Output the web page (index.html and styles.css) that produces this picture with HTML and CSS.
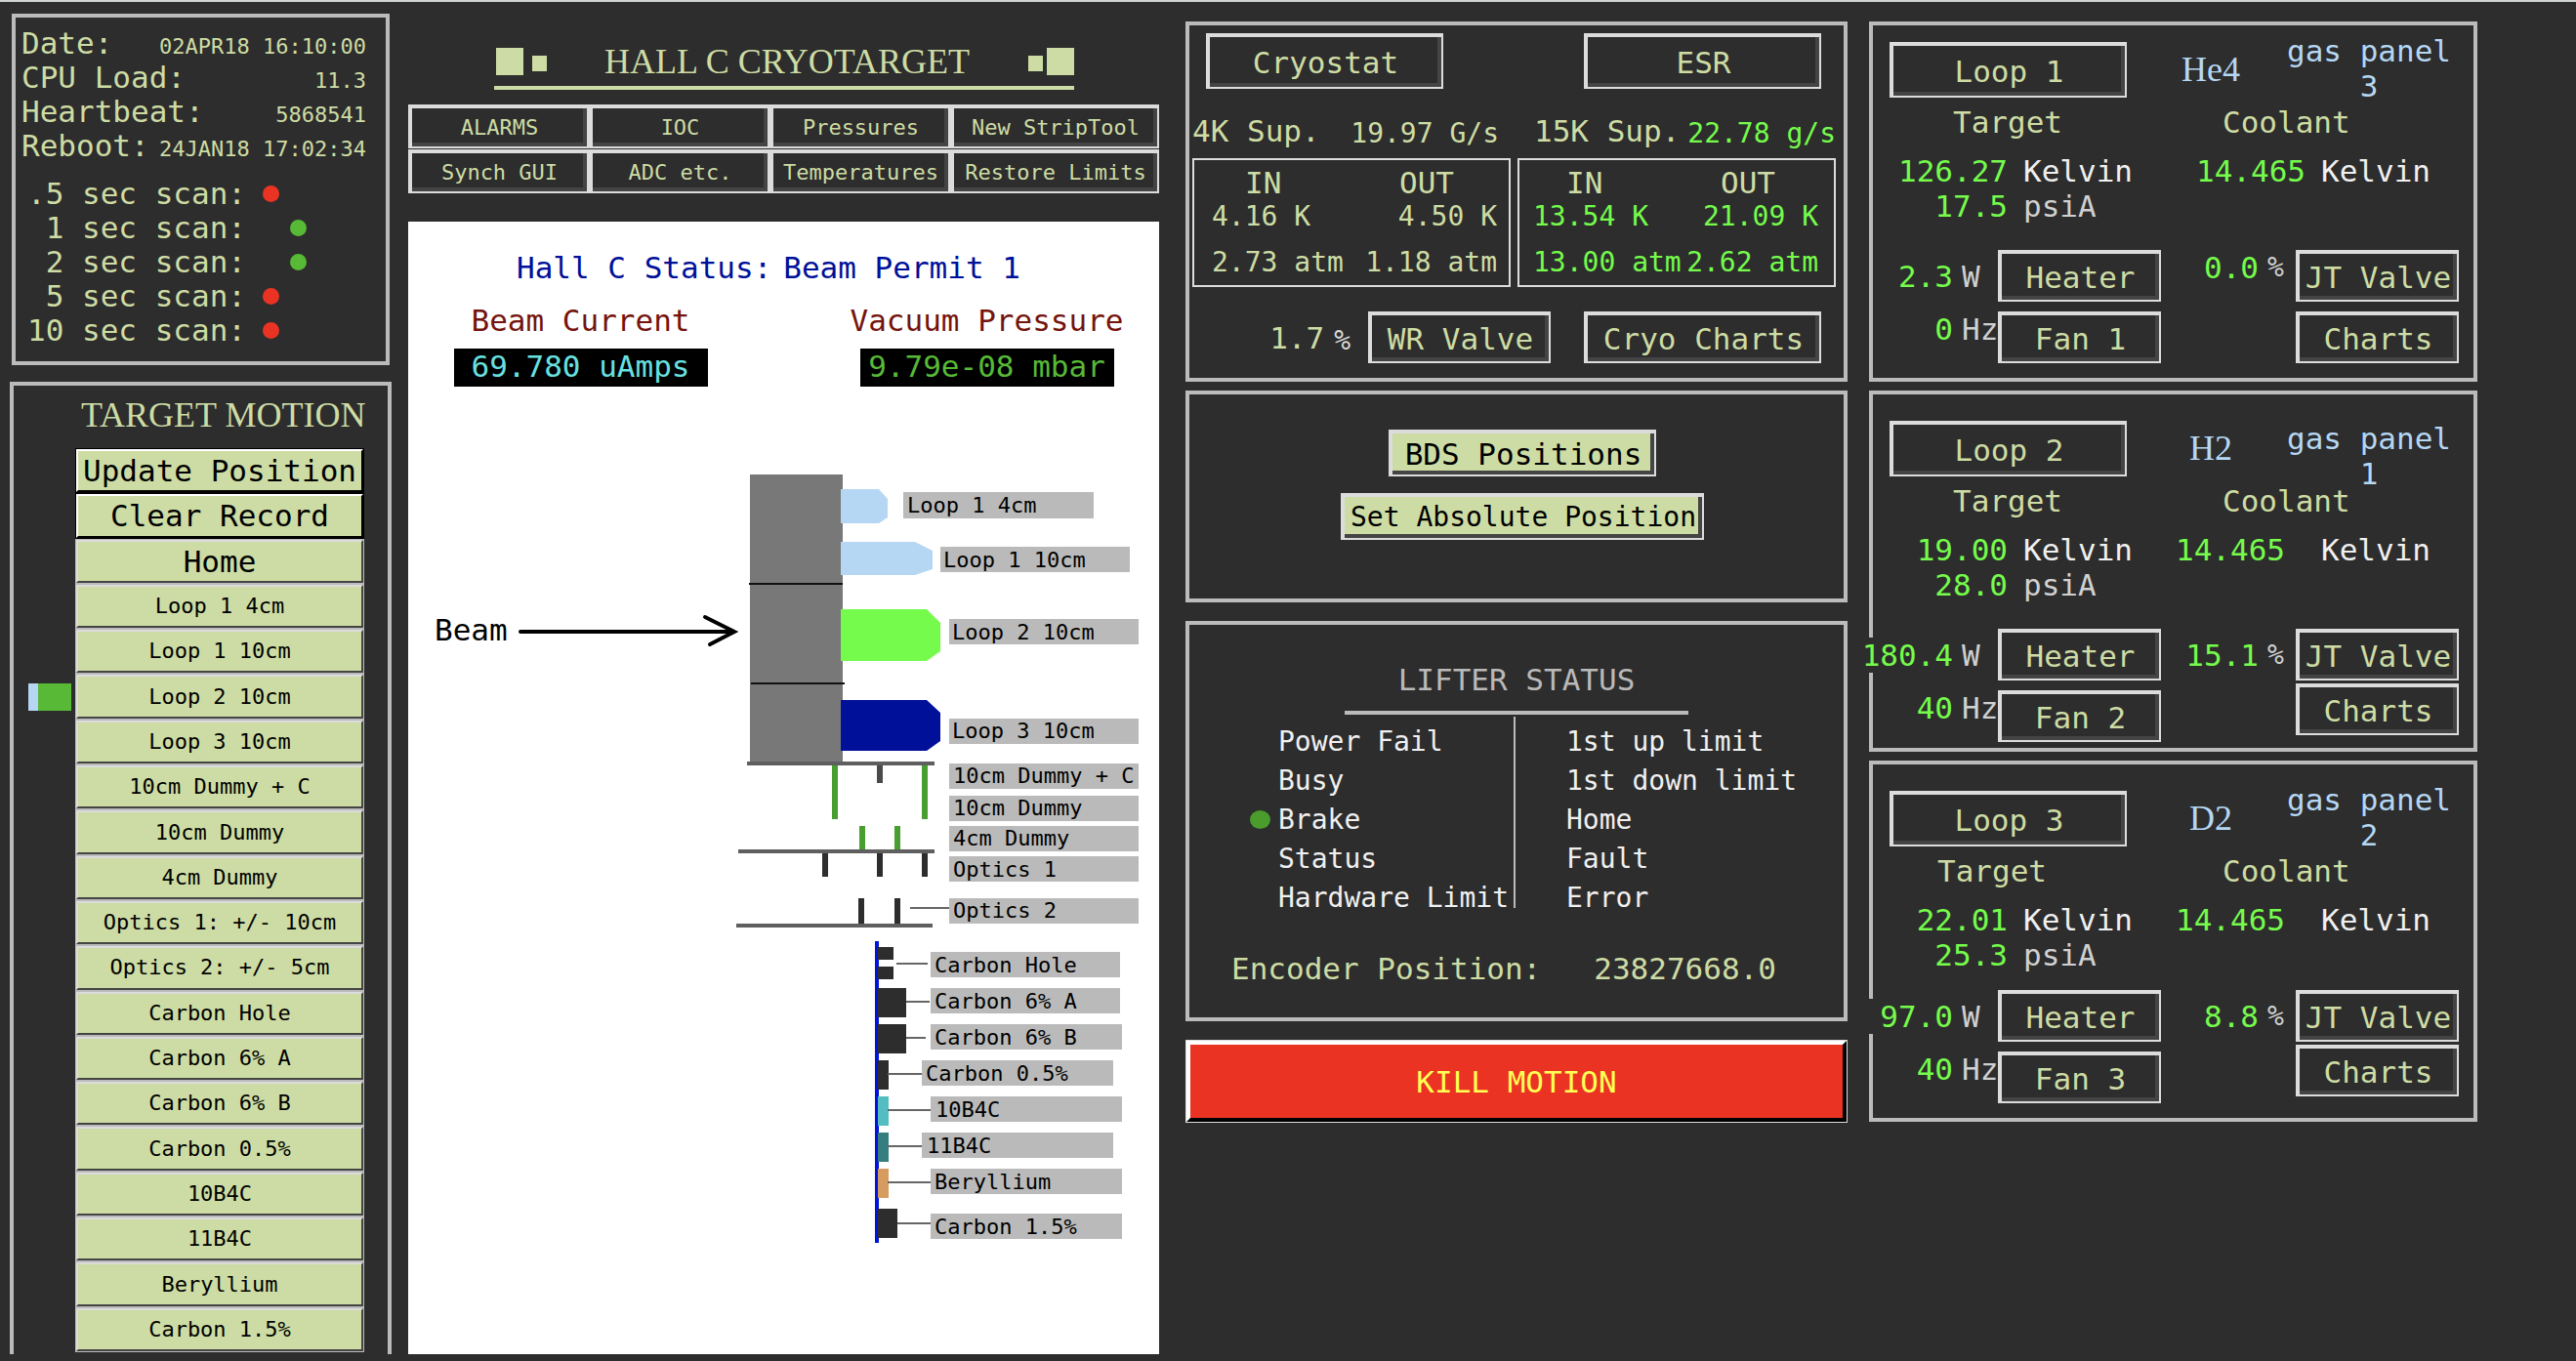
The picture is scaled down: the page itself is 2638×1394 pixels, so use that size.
FILE: index.html
```html
<!DOCTYPE html>
<html lang="en">
<head>
    <meta charset="UTF-8">
    <meta name="viewport" content="width=device-width, initial-scale=1.0">
    <title>Hall C Cryotarget</title>
    <link rel="stylesheet" href="styles.css">
</head>
<body>
    <main class="screen">
        <!-- IOC health and target motion -->
        <section class="col col-motion">
            <div class="panel ioc">
                <dl class="ioc-info">
                    <dt>Date:</dt><dd>02APR18 16:10:00</dd>
                    <dt>CPU Load:</dt><dd>11.3</dd>
                    <dt>Heartbeat:</dt><dd>5868541</dd>
                    <dt>Reboot:</dt><dd>24JAN18 17:02:34</dd>
                </dl>
                <ul class="scans">
                    <li><span>.5 sec scan:</span><i class="led led-red"></i></li>
                    <li><span>1 sec scan:</span><i class="led led-green"></i></li>
                    <li><span>2 sec scan:</span><i class="led led-green"></i></li>
                    <li><span>5 sec scan:</span><i class="led led-red"></i></li>
                    <li><span>10 sec scan:</span><i class="led led-red"></i></li>
                </ul>
            </div>

            <div class="panel motion">
                <h2 class="serif">TARGET MOTION</h2>
                <div class="positions">
                    <div class="marker"></div>
                    <button type="button" class="pos pos-main pos-default">Update Position</button>
                    <button type="button" class="pos pos-main pos-default">Clear Record</button>
                    <button type="button" class="pos pos-main">Home</button>
                    <button type="button" class="pos">Loop 1 4cm</button>
                    <button type="button" class="pos">Loop 1 10cm</button>
                    <button type="button" class="pos">Loop 2 10cm</button>
                    <button type="button" class="pos">Loop 3 10cm</button>
                    <button type="button" class="pos">10cm Dummy + C</button>
                    <button type="button" class="pos">10cm Dummy</button>
                    <button type="button" class="pos">4cm Dummy</button>
                    <button type="button" class="pos">Optics 1: +/- 10cm</button>
                    <button type="button" class="pos">Optics 2: +/- 5cm</button>
                    <button type="button" class="pos">Carbon Hole</button>
                    <button type="button" class="pos">Carbon 6% A</button>
                    <button type="button" class="pos">Carbon 6% B</button>
                    <button type="button" class="pos">Carbon 0.5%</button>
                    <button type="button" class="pos">10B4C</button>
                    <button type="button" class="pos">11B4C</button>
                    <button type="button" class="pos">Beryllium</button>
                    <button type="button" class="pos">Carbon 1.5%</button>
                </div>
            </div>
        </section>

        <!-- Title, menu and target ladder -->
        <section class="col col-ladder">
            <header class="title">
                <i class="sq sq-big"></i><i class="sq sq-left"></i>
                <h1 class="serif">HALL C CRYOTARGET</h1>
                <i class="sq sq-right"></i><i class="sq sq-big"></i>
            </header>
            <nav class="menu">
                <button type="button" class="btn">ALARMS</button>
                <button type="button" class="btn">IOC</button>
                <button type="button" class="btn">Pressures</button>
                <button type="button" class="btn">New StripTool</button>
                <button type="button" class="btn">Synch GUI</button>
                <button type="button" class="btn">ADC etc.</button>
                <button type="button" class="btn">Temperatures</button>
                <button type="button" class="btn">Restore Limits</button>
            </nav>
            <div class="ladder">
                <p class="hall-status"><span>Hall C Status:</span><span>Beam Permit 1</span></p>
                <div class="beam-info">
                    <div class="beam-item">
                        <h3>Beam Current</h3>
                        <div class="readout cyan">69.780 uAmps</div>
                    </div>
                    <div class="beam-item">
                        <h3>Vacuum Pressure</h3>
                        <div class="readout lime">9.79e-08 mbar</div>
                    </div>
                </div>
                <svg class="ladder-svg" viewBox="418 395 769 991">
                    <!-- beam arrow -->
                    <text class="beam-text" x="445" y="655">Beam</text>
                    <path class="arrow" d="M533 646H752M722 631L752 646L727 659"/>

                    <!-- loop cells -->
                    <rect x="768" y="485" width="95" height="295" fill="#787878"/>
                    <path d="M767 597H863M769 699H865" stroke="#111" stroke-width="2"/>
                    <path d="M861 500H900L909 510V529L900 535H861Z" fill="#b5d7f3"/>
                    <path d="M861 554H937L955 563V582L937 588H861Z" fill="#b5d7f3"/>
                    <path d="M861 623H949L963 637V666L949 676H861Z" fill="#75fb4c"/>
                    <path d="M861 716H949L963 729V758L949 768H861Z" fill="#001099"/>

                    <!-- dummies and optics -->
                    <path d="M765 781H957M756 871H957M754 947H955" stroke="#5f5f5f" stroke-width="4"/>
                    <path d="M855 783V838M947 783V838M883 845V869M919 845V869" stroke="#489e30" stroke-width="6"/>
                    <path d="M901 783V801" stroke="#4a4a4a" stroke-width="6"/>
                    <path d="M845 873V897M901 873V897M947 873V897M882 919V945M919 919V945" stroke="#2d2d2d" stroke-width="6"/>

                    <!-- solid targets -->
                    <path d="M898 963V1272" stroke="#0014d8" stroke-width="4"/>
                    <g fill="#2d2d2d">
                        <rect x="899" y="969" width="16" height="13"/>
                        <rect x="899" y="989" width="16" height="13"/>
                        <rect x="899" y="1011" width="29" height="30"/>
                        <rect x="899" y="1048" width="29" height="30"/>
                        <rect x="899" y="1085" width="11" height="30"/>
                        <rect x="899" y="1237" width="20" height="30"/>
                    </g>
                    <rect x="899" y="1122" width="11" height="30" fill="#53bdc1"/>
                    <rect x="899" y="1159" width="11" height="30" fill="#367d80"/>
                    <rect x="899" y="1196" width="11" height="30" fill="#d69b5e"/>
                    <path d="M932 929H972M918 986H950M928 1025H952M928 1062H948M909 1099H944M909 1136H953M909 1173H944M909 1210H953M919 1252H953" stroke="#666" stroke-width="2"/>

                    <!-- labels -->
                    <g fill="#bababa">
                        <rect x="925" y="503" width="195" height="27"/>
                        <rect x="963" y="559" width="194" height="26"/>
                        <rect x="972" y="633" width="194" height="26"/>
                        <rect x="972" y="735" width="194" height="26"/>
                        <rect x="972" y="781" width="194" height="26"/>
                        <rect x="972" y="814" width="194" height="26"/>
                        <rect x="972" y="845" width="194" height="26"/>
                        <rect x="972" y="876" width="194" height="26"/>
                        <rect x="972" y="919" width="194" height="26"/>
                        <rect x="953" y="974" width="194" height="26"/>
                        <rect x="953" y="1011" width="194" height="26"/>
                        <rect x="953" y="1048" width="196" height="26"/>
                        <rect x="944" y="1085" width="196" height="26"/>
                        <rect x="953" y="1122" width="196" height="26"/>
                        <rect x="944" y="1159" width="196" height="26"/>
                        <rect x="953" y="1196" width="196" height="26"/>
                        <rect x="953" y="1242" width="196" height="26"/>
                    </g>
                    <g class="tag">
                        <text x="929" y="524">Loop 1 4cm</text>
                        <text x="966" y="580">Loop 1 10cm</text>
                        <text x="975" y="654">Loop 2 10cm</text>
                        <text x="975" y="755">Loop 3 10cm</text>
                        <text x="976" y="801">10cm Dummy + C</text>
                        <text x="976" y="834">10cm Dummy</text>
                        <text x="976" y="865">4cm Dummy</text>
                        <text x="976" y="897">Optics 1</text>
                        <text x="976" y="939">Optics 2</text>
                        <text x="957" y="995">Carbon Hole</text>
                        <text x="957" y="1032">Carbon 6% A</text>
                        <text x="957" y="1069">Carbon 6% B</text>
                        <text x="948" y="1106">Carbon 0.5%</text>
                        <text x="958" y="1143">10B4C</text>
                        <text x="949" y="1180">11B4C</text>
                        <text x="957" y="1217">Beryllium</text>
                        <text x="957" y="1263">Carbon 1.5%</text>
                    </g>
                </svg>
            </div>
        </section>

        <!-- Cryogen supply and lifter -->
        <section class="col col-cryo">
            <div class="panel supply">
                <div class="supply-top">
                    <button type="button" class="btn btn-wide">Cryostat</button>
                    <button type="button" class="btn btn-wide">ESR</button>
                </div>
                <div class="supply-grid">
                    <div class="sup"><span>4K Sup.</span><span class="mid">19.97 G/s</span></div>
                    <div class="sup sup-15k"><span>15K Sup.</span><span class="mid green">22.78 g/s</span></div>
                    <table class="flows">
                        <tr><th>IN</th><th>OUT</th></tr>
                        <tr><td>4.16 K</td><td>4.50 K</td></tr>
                        <tr class="atm"><td>2.73 atm</td><td>1.18 atm</td></tr>
                    </table>
                    <table class="flows flows-15k">
                        <tr><th>IN</th><th>OUT</th></tr>
                        <tr><td>13.54 K</td><td>21.09 K</td></tr>
                        <tr class="atm"><td>13.00 atm</td><td>2.62 atm</td></tr>
                    </table>
                </div>
                <div class="supply-bottom">
                    <span>1.7</span>
                    <span class="percent">%</span>
                    <button type="button" class="btn btn-valve">WR Valve</button>
                    <button type="button" class="btn btn-wide">Cryo Charts</button>
                </div>
            </div>

            <div class="panel bds">
                <button type="button" class="btn btn-green btn-bds">BDS Positions</button>
                <button type="button" class="btn btn-green btn-abs">Set Absolute Position</button>
            </div>

            <div class="panel lifter">
                <h2>LIFTER STATUS</h2>
                <div class="lifter-lists">
                    <ul>
                        <li>Power Fail</li>
                        <li>Busy</li>
                        <li class="on">Brake</li>
                        <li>Status</li>
                        <li>Hardware Limit</li>
                    </ul>
                    <ul>
                        <li>1st up limit</li>
                        <li>1st down limit</li>
                        <li>Home</li>
                        <li>Fault</li>
                        <li>Error</li>
                    </ul>
                </div>
                <p class="encoder"><span>Encoder Position:</span><span>23827668.0</span></p>
            </div>

            <button type="button" class="kill">KILL MOTION</button>
        </section>

        <!-- Loops -->
        <section class="col col-loops">
            <div class="panel loop loop-1">
                <div class="loop-side">
                    <div class="loop-head"><button type="button" class="btn btn-wide">Loop 1</button></div>
                    <h3>Target</h3>
                    <div class="readings">
                        <span class="val">126.27</span><span class="kelvin">Kelvin</span>
                        <span class="val">17.5</span><span class="unit">psiA</span>
                    </div>
                    <div class="controls">
                        <span class="val">2.3</span><span class="unit">W</span><button type="button" class="btn">Heater</button>
                    </div>
                    <div class="controls top">
                        <span class="val">0</span><span class="unit">Hz</span><button type="button" class="btn">Fan 1</button>
                    </div>
                </div>
                <div class="loop-side coolant">
                    <div class="loop-head">
                        <span class="gas serif">He4</span>
                        <span class="gas-panel">gas panel<br>3</span>
                    </div>
                    <h3>Coolant</h3>
                    <div class="readings">
                        <span class="val">14.465</span><span class="kelvin">Kelvin</span>
                    </div>
                    <div class="controls top">
                        <span class="val">0.0</span><span class="unit percent">%</span><button type="button" class="btn">JT Valve</button>
                    </div>
                    <div class="controls charts"><button type="button" class="btn">Charts</button></div>
                </div>
            </div>

            <div class="panel loop loop-2">
                <div class="loop-side">
                    <div class="loop-head"><button type="button" class="btn btn-wide">Loop 2</button></div>
                    <h3>Target</h3>
                    <div class="readings">
                        <span class="val">19.00</span><span class="kelvin">Kelvin</span>
                        <span class="val">28.0</span><span class="unit">psiA</span>
                    </div>
                    <div class="controls">
                        <span class="val power">180.4</span><span class="unit">W</span><button type="button" class="btn">Heater</button>
                    </div>
                    <div class="controls top">
                        <span class="val">40</span><span class="unit">Hz</span><button type="button" class="btn">Fan 2</button>
                    </div>
                </div>
                <div class="loop-side coolant">
                    <div class="loop-head">
                        <span class="gas serif">H2</span>
                        <span class="gas-panel">gas panel<br>1</span>
                    </div>
                    <h3>Coolant</h3>
                    <div class="readings">
                        <span class="val">14.465</span><span class="kelvin">Kelvin</span>
                    </div>
                    <div class="controls">
                        <span class="val">15.1</span><span class="unit percent">%</span><button type="button" class="btn">JT Valve</button>
                    </div>
                    <div class="controls charts"><button type="button" class="btn">Charts</button></div>
                </div>
            </div>

            <div class="panel loop loop-3">
                <div class="loop-side">
                    <div class="loop-head"><button type="button" class="btn btn-wide">Loop 3</button></div>
                    <h3>Target</h3>
                    <div class="readings">
                        <span class="val">22.01</span><span class="kelvin">Kelvin</span>
                        <span class="val">25.3</span><span class="unit">psiA</span>
                    </div>
                    <div class="controls">
                        <span class="val power">97.0</span><span class="unit">W</span><button type="button" class="btn">Heater</button>
                    </div>
                    <div class="controls top">
                        <span class="val">40</span><span class="unit">Hz</span><button type="button" class="btn">Fan 3</button>
                    </div>
                </div>
                <div class="loop-side coolant">
                    <div class="loop-head">
                        <span class="gas serif">D2</span>
                        <span class="gas-panel">gas panel<br>2</span>
                    </div>
                    <h3>Coolant</h3>
                    <div class="readings">
                        <span class="val">14.465</span><span class="kelvin">Kelvin</span>
                    </div>
                    <div class="controls">
                        <span class="val">8.8</span><span class="unit percent">%</span><button type="button" class="btn">JT Valve</button>
                    </div>
                    <div class="controls charts"><button type="button" class="btn">Charts</button></div>
                </div>
            </div>
        </section>
    </main>
</body>
</html>
```
FILE: styles.css
```css
:root {
    --bg: #2d2d2d;
    --pale: #cddca4;
    --line: #bbbbbb;
    --light: #dcdcdc;
    --shade: #444444;
    --green: #75fb4c;
    --blue: #b5d7f3;
    --small: 22px;
    --medium: 28px;
    --large: 31px;
}

* {
    box-sizing: border-box;
}

body {
    margin: 0;
    background: var(--bg);
    border-top: 2px solid #d0d4d0;
    color: var(--pale);
    font-family: "DejaVu Sans Mono", "Liberation Mono", monospace;
    font-size: var(--large);
    line-height: 36px;
}

h1, h2, h3, p, ul, dl, dd {
    margin: 0;
    padding: 0;
    font-size: inherit;
    font-weight: normal;
    list-style: none;
}

button {
    font: inherit;
    color: inherit;
    padding: 0;
    white-space: nowrap;
    cursor: pointer;
}

.serif {
    font-family: "Liberation Serif", serif;
    font-size: 36px;
}

.screen {
    display: grid;
    grid-template-columns: minmax(0, 408fr) minmax(0, 796fr) minmax(0, 700fr) minmax(0, 623fr);
    padding: 12px 101px 8px 10px;
}

.col {
    display: flex;
    flex-direction: column;
}

.panel {
    border: 4px solid var(--line);
}

/* Motif style raised buttons */
.btn {
    height: 53px;
    background: var(--bg);
    border: solid var(--light);
    border-width: 4px 2px 2px 4px;
    box-shadow: inset -4px -4px 0 var(--shade);
}

.btn-wide {
    width: 243px;
}

.green {
    color: var(--green);
}

.percent {
    color: #d9d9d9;
    font-size: var(--medium);
}

/* Column 1 */
.col-motion {
    margin-right: 17px;
}

.ioc {
    margin: 0 2px;
    padding: 9px 20px 14px 6px;
    line-height: 35px;
}

.ioc-info {
    display: grid;
    grid-template-columns: 132px 1fr;
    margin-bottom: 14px;
    white-space: nowrap;
}

.ioc-info dd {
    font-size: var(--small);
    text-align: right;
    padding-top: 3px;
    height: 35px;
}

.scans li {
    display: flex;
    align-items: center;
}

.scans span {
    width: 230px;
    text-align: right;
}

.led {
    width: 17px;
    height: 17px;
    border-radius: 50%;
    margin-left: 17px;
}

.led-red {
    background: #eb3323;
}

.led-green {
    background: #57b936;
    margin-left: 45px;
}

.motion {
    flex: 1;
    display: flex;
    flex-direction: column;
    margin-top: 17px;
    border-bottom: 0;
    padding: 0 24px 2px 15px;
}

.motion h2 {
    line-height: 60px;
    padding: 0 0 4px 54px;
    white-space: nowrap;
}

.positions {
    flex: 1;
    display: grid;
    grid-template-columns: 44px 1fr;
    grid-auto-rows: 1fr;
    column-gap: 4px;
}

.pos {
    grid-column: 2;
    min-height: 0;
    background: var(--pale);
    border: 3px solid;
    border-color: var(--light) var(--shade) var(--shade) var(--light);
    outline: 1px solid var(--line);
    outline-offset: -1px;
    color: #000;
    font-size: var(--small);
    line-height: 36px;
}

.pos-main {
    font-size: var(--large);
}

.pos-default {
    border-color: #fff #000 #000 #fff;
    outline-color: #000;
}

.marker {
    grid-column: 1;
    grid-row: 6;
    align-self: center;
    height: 28px;
    background: #57b936;
    border-left: 10px solid var(--blue);
}

/* Column 2 */
.col-ladder {
    margin-right: 27px;
}

.title {
    display: flex;
    align-items: center;
    width: 594px;
    height: 78px;
    margin: 0 auto 15px;
    padding: 24px 0 0 2px;
    border-bottom: 4px solid var(--pale);
}

.title h1 {
    margin: 0 auto;
    white-space: nowrap;
}

.sq {
    width: 15px;
    height: 16px;
    margin-top: 4px;
    background: var(--pale);
}

.sq-left {
    margin-left: 9px;
}

.sq-right {
    margin-right: 4px;
}

.sq-big {
    width: 28px;
    height: 28px;
    margin: 0;
}

.menu {
    display: grid;
    grid-template-columns: 185fr 185fr 185fr 214fr;
    row-gap: 1px;
    margin-bottom: 29px;
}

.menu .btn {
    height: 45px;
    font-size: var(--small);
}

.ladder {
    background: #fff;
    padding-top: 29px;
}

.hall-status {
    display: flex;
    gap: 12px;
    padding-left: 111px;
    color: #001099;
}

.beam-info {
    display: flex;
    justify-content: space-between;
    padding: 18px 36px 0;
}

.beam-item {
    display: flex;
    flex-direction: column;
    align-items: center;
    width: 281px;
    color: #75140c;
}

.readout {
    width: 260px;
    height: 39px;
    margin-top: 11px;
    background: #000;
    text-align: center;
}

.cyan {
    color: #68e0e0;
}

.lime {
    color: #57b936;
}

.ladder-svg {
    display: block;
    width: 100%;
    max-width: 769px;
}

.beam-text {
    font-size: 31px;
}

.arrow {
    fill: none;
    stroke: #000;
    stroke-width: 4;
    stroke-linecap: round;
}

.tag {
    font-size: 22px;
}

/* Column 3 */
.col-cryo {
    margin-right: 22px;
    padding-top: 8px;
}

.supply {
    padding: 8px 8px 15px 3px;
}

.supply-top {
    display: flex;
    justify-content: space-between;
    padding: 0 15px 0 14px;
}

.supply-top .btn,
.loop-head .btn {
    height: 57px;
}

.supply-grid {
    display: grid;
    grid-template-columns: 1fr 1fr;
    gap: 10px 7px;
    margin: 25px 0;
}

.sup {
    display: flex;
    justify-content: space-between;
    padding: 0 12px 0 0;
    white-space: nowrap;
}

.sup-15k {
    padding: 0 0 0 17px;
}

.mid {
    font-size: var(--medium);
    padding-top: 3px;
    height: 36px;
}

.flows {
    height: 132px;
    border: 2px solid var(--light);
    border-spacing: 0;
    font-size: var(--medium);
    padding: 5px 12px 5px 18px;
    line-height: 34px;
}

.flows-15k {
    padding: 5px 16px 5px 14px;
    color: var(--green);
}

.flows th {
    padding: 0 44px 0 34px;
    color: var(--pale);
    font-size: var(--large);
    font-weight: normal;
    text-align: left;
}

.flows td {
    padding: 0;
    white-space: nowrap;
}

.flows th:last-child,
.flows td:last-child {
    text-align: right;
}

.flows th:last-child {
    padding-left: 0;
}

.flows .atm td {
    padding-top: 12px;
}

.supply-bottom {
    display: flex;
    justify-content: flex-end;
    align-items: center;
    padding-right: 15px;
}

.supply-bottom .percent {
    margin: 6px 18px 0 10px;
}

.btn-valve {
    width: 187px;
    margin-right: 34px;
}

.bds {
    display: flex;
    flex-direction: column;
    align-items: center;
    gap: 17px;
    margin-top: 9px;
    padding: 36px 0 60px 12px;
}

.btn-green {
    height: 48px;
    background: var(--pale);
    color: #000;
}

.btn-bds {
    width: 274px;
}

.btn-abs {
    width: 372px;
    font-size: var(--medium);
}

.lifter {
    margin-top: 19px;
    padding: 36px 0 32px;
}

.lifter h2 {
    width: 352px;
    margin: 0 auto;
    padding-bottom: 12px;
    border-bottom: 4px solid var(--line);
    color: #b9b9b9;
    line-height: 40px;
    text-align: center;
}

.lifter-lists {
    display: grid;
    grid-template-columns: 1fr 1fr;
    margin-top: 2px;
    color: #f0f0f0;
    font-size: var(--medium);
    line-height: 20px;
}

.lifter-lists ul {
    display: flex;
    flex-direction: column;
    gap: 20px;
    padding: 16px 0 0 91px;
    white-space: nowrap;
}

.lifter-lists ul + ul {
    margin-left: -3px;
    padding-left: 52px;
    border-left: 2px solid var(--line);
}

.on {
    display: flex;
    gap: 8px;
    margin-left: -29px;
}

.on::before {
    content: "";
    width: 21px;
    height: 19px;
    border-radius: 50%;
    background: #4a9c2c;
}

.encoder {
    display: flex;
    gap: 54px;
    margin-top: 44px;
    padding-left: 43px;
}

.kill {
    height: 85px;
    margin-top: 19px;
    background: #eb3323;
    border: 5px solid;
    border-color: #fff #000 #000 #fff;
    outline: 1px solid #ddd;
    outline-offset: -1px;
    color: #ffff54;
}

/* Column 4 */
.col-loops {
    gap: 9px;
    padding-top: 8px;
}

.loop {
    display: grid;
    grid-template-columns: minmax(0, 1fr) minmax(0, 1fr);
    column-gap: 10px;
    padding: 0 15px 15px 0;
}

.loop-head {
    display: flex;
    height: 91px;
    padding-top: 27px;
}

.loop-1 .loop-head {
    height: 81px;
    padding-top: 17px;
}

.loop-head .btn {
    margin-left: 17px;
}

.loop h3 {
    padding-left: 82px;
}

.loop-3 h3 {
    padding-left: 66px;
}

.loop .coolant h3 {
    padding-left: 53px;
}

.readings {
    display: grid;
    grid-template-columns: 138px 1fr;
    grid-auto-rows: 36px;
    column-gap: 16px;
    height: 72px;
    margin: 14px 0 27px;
}

.loop-3 .readings {
    margin-bottom: 18px;
}

.loop-2 .coolant .readings,
.loop-3 .coolant .readings {
    grid-template-columns: 117px 1fr;
    column-gap: 37px;
}

.val {
    display: flex;
    justify-content: flex-end;
    color: var(--green);
}

.kelvin {
    color: #f0f0f0;
}

.unit {
    color: #d0d0d0;
}

.controls {
    display: grid;
    grid-template-columns: minmax(0, 1fr) 46px 167px;
    align-items: center;
}

.controls .unit {
    padding-left: 9px;
}

.controls + .controls {
    margin-top: 10px;
}

.coolant .controls {
    grid-template-columns: minmax(0, 1fr) 38px 167px;
}

.controls.top {
    align-items: start;
}

/* wide enough to spill over the panel border */
.controls .power {
    justify-self: end;
    min-width: 94px;
    background: var(--bg);
}

.loop .charts {
    margin-top: 3px;
}

.loop-1 .charts {
    margin-top: 10px;
}

.charts .btn {
    grid-column: 3;
}

.gas {
    width: 82px;
    color: var(--blue);
    line-height: 57px;
    text-align: center;
}

.gas-panel {
    margin: -9px 8px 0 auto;
    color: var(--blue);
    text-align: center;
}

.loop-2 .gas-panel {
    margin-top: 0;
}

.loop-2 {
    padding-bottom: 6px;
}
```
